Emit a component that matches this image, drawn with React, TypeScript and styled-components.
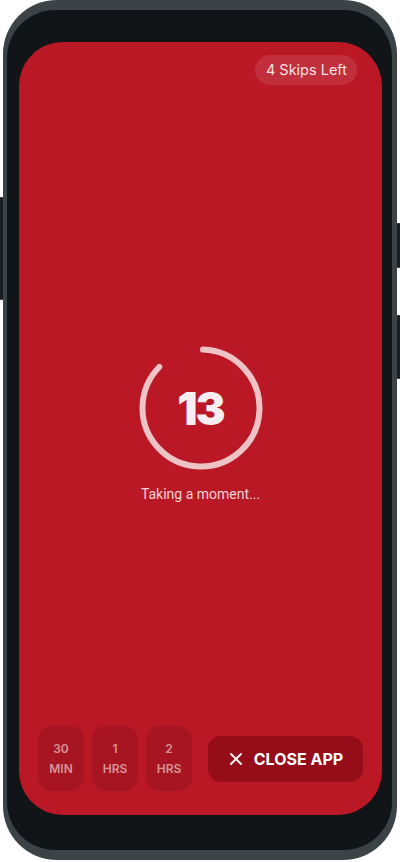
import styled, { createGlobalStyle } from "styled-components";

const TOTAL_SECONDS = 15;
const SECONDS_LEFT = 13;
const RING_SIZE = 130;
const RING_RADIUS = 58.5;
const RING_STROKE = 6;

const GlobalStyle = createGlobalStyle`
  html, body {
    margin: 0;
    padding: 0;
    background: #ffffff;
  }

  * {
    box-sizing: border-box;
  }
`;

const Page = styled.div`
  width: 400px;
  height: 862px;
  padding-left: 3px;
`;

const Frame = styled.div`
  position: relative;
  width: 394px;
  height: 860px;
  padding: 10px 5px 10px 4px;

  background: #3c4346;
  border-radius: 54px;
`;

const SideButton = styled.span<{ $side: "left" | "right"; $top: number; $height: number }>`
  position: absolute;
  top: ${({ $top }) => $top}px;
  ${({ $side }) => ($side === "left" ? "left: -3px;" : "right: -3px;")}
  width: 3px;
  height: ${({ $height }) => $height}px;

  background: #1b1f21;
  border-radius: 1px;
`;

const Bezel = styled.div`
  height: 100%;
  padding: 32px 10px 35px 12px;

  background: #121517;
  border-radius: 48px;
`;

const Screen = styled.main`
  display: flex;
  flex-direction: column;
  height: 100%;
  padding: 13px 19px 24px 19px;

  background: #bb1826;
  border-radius: 44px;
`;

const TopBar = styled.header`
  display: flex;
  justify-content: flex-end;
  padding-right: 6px;
`;

const SkipsPill = styled.div`
  height: 30px;
  padding: 0 10px 0 11px;

  font-family: "Inter", "Noto Sans", sans-serif;
  font-size: 14.5px;
  line-height: 30px;
  color: rgba(255, 255, 255, 0.88);
  white-space: nowrap;

  background: rgba(255, 255, 255, 0.1);
  border-radius: 15px;
`;

const Middle = styled.section`
  flex: 1;
  display: flex;
  flex-direction: column;
  align-items: center;
  justify-content: center;
  padding-top: 34px;
`;

const Ring = styled.div`
  position: relative;
  width: ${RING_SIZE}px;
  height: ${RING_SIZE}px;
`;

const Count = styled.span`
  position: absolute;
  inset: 0;
  display: flex;
  align-items: center;
  justify-content: center;

  font-family: "Inter", "Lato", sans-serif;
  font-size: 45px;
  font-weight: 900;
  letter-spacing: -2px;
  color: #f6eef0;
`;

const Caption = styled.p`
  margin: 13px 0 0;

  font-family: "Roboto", sans-serif;
  font-size: 14px;
  color: rgba(255, 255, 255, 0.82);
`;

const BottomBar = styled.footer`
  display: flex;
  align-items: center;
  gap: 8px;
`;

const SnoozeTile = styled.button`
  display: flex;
  flex-direction: column;
  align-items: center;
  justify-content: center;
  gap: 6px;
  width: 46px;
  height: 65px;
  padding: 0;

  font-family: "Inter", sans-serif;
  font-size: 12px;
  font-weight: 600;
  line-height: 14px;
  color: rgba(255, 255, 255, 0.55);

  background: rgba(0, 0, 0, 0.11);
  border: none;
  border-radius: 14px;
`;

const CloseButton = styled.button`
  display: flex;
  align-items: center;
  justify-content: center;
  gap: 12px;
  width: 155px;
  height: 46px;
  margin-left: 8px;
  padding: 0 0 0 2px;

  font-family: "Inter", sans-serif;
  font-size: 16px;
  font-weight: 700;
  color: #ffffff;

  background: #960d1a;
  border: none;
  border-radius: 13px;
`;

const CloseIcon = () => (
  <svg width="12" height="12" viewBox="0 0 12 12" fill="none">
    <path d="M1 1L11 11M11 1L1 11" stroke="#ffffff" strokeWidth="1.8" strokeLinecap="round" />
  </svg>
);

const CountdownRing = ({ secondsLeft, total }: { secondsLeft: number; total: number }) => {
  const circumference = 2 * Math.PI * RING_RADIUS;
  const visible = (secondsLeft / total) * circumference;
  const c = RING_SIZE / 2;

  return (
    <Ring>
      <svg width={RING_SIZE} height={RING_SIZE} viewBox={`0 0 ${RING_SIZE} ${RING_SIZE}`}>
        <circle
          cx={c}
          cy={c}
          r={RING_RADIUS}
          fill="none"
          stroke="rgba(255,255,255,0.74)"
          strokeWidth={RING_STROKE}
          strokeLinecap="round"
          strokeDasharray={`${visible} ${circumference}`}
          transform={`rotate(-88 ${c} ${c})`}
        />
      </svg>
      <Count>{secondsLeft}</Count>
    </Ring>
  );
};

const SNOOZE_OPTIONS = [
  { value: "30", unit: "MIN" },
  { value: "1", unit: "HRS" },
  { value: "2", unit: "HRS" },
];

export default function App() {
  return (
    <>
      <GlobalStyle />
      <Page>
        <Frame>
          <SideButton $side="left" $top={197} $height={103} />
          <SideButton $side="right" $top={223} $height={45} />
          <SideButton $side="right" $top={315} $height={64} />
          <Bezel>
            <Screen>
              <TopBar>
                <SkipsPill>4 Skips Left</SkipsPill>
              </TopBar>
              <Middle>
                <CountdownRing secondsLeft={SECONDS_LEFT} total={TOTAL_SECONDS} />
                <Caption>Taking a moment...</Caption>
              </Middle>
              <BottomBar>
                {SNOOZE_OPTIONS.map((o) => (
                  <SnoozeTile key={o.value + o.unit} type="button">
                    <span>{o.value}</span>
                    <span>{o.unit}</span>
                  </SnoozeTile>
                ))}
                <CloseButton type="button">
                  <CloseIcon />
                  CLOSE APP
                </CloseButton>
              </BottomBar>
            </Screen>
          </Bezel>
        </Frame>
      </Page>
    </>
  );
}
